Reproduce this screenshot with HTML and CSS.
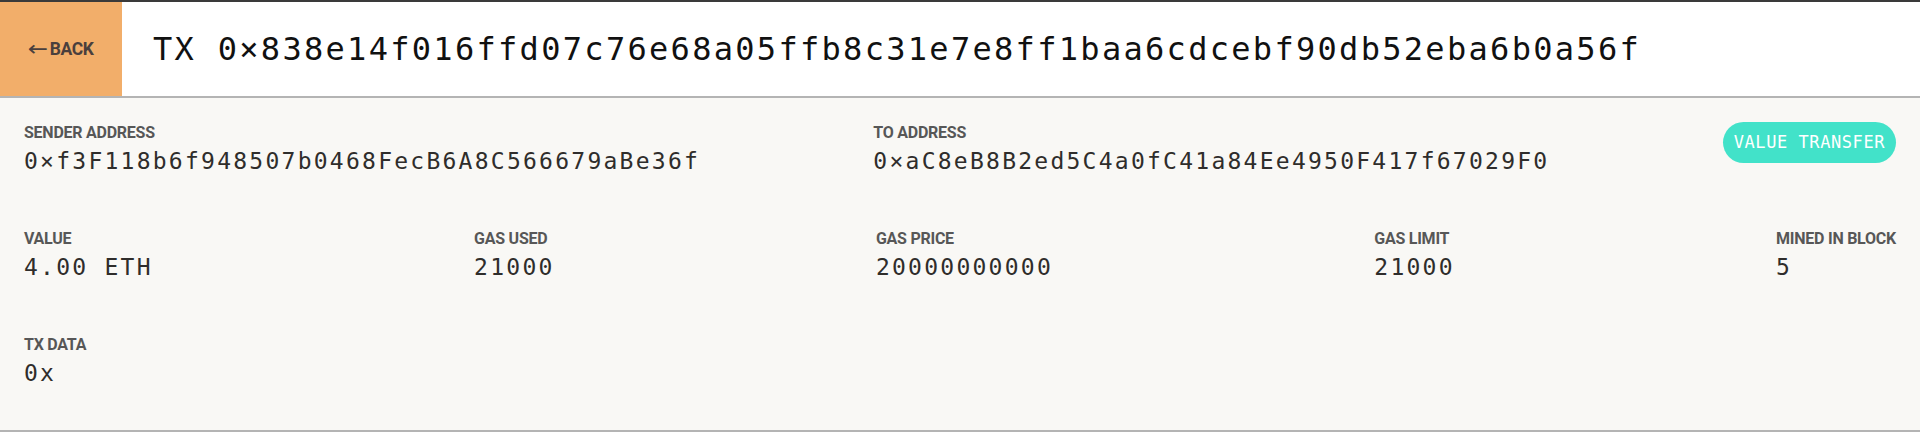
FILE: index.html
```html
<!DOCTYPE html>
<html lang="en">
<head>
<meta charset="utf-8">
<title>TX 0x838e14f016ffd07c76e68a05ffb8c31e7e8ff1baa6cdcebf90db52eba6b0a56f</title>
<link rel="stylesheet" href="styles.css">
</head>
<body>
<div class="page">
  <header class="header">
    <a class="back" href="#"><span class="arrow">&larr;</span><span>BACK</span></a>
    <h1 class="title">TX 0×838e14f016ffd07c76e68a05ffb8c31e7e8ff1baa6cdcebf90db52eba6b0a56f</h1>
  </header>
  <section class="details">
    <div class="row">
      <div class="field">
        <div class="label">Sender Address</div>
        <div class="value">0×f3F118b6f948507b0468FecB6A8C566679aBe36f</div>
      </div>
      <div class="field">
        <div class="label">To Address</div>
        <div class="value">0×aC8eB8B2ed5C4a0fC41a84Ee4950F417f67029F0</div>
      </div>
      <div class="pill">VALUE TRANSFER</div>
    </div>
    <div class="row">
      <div class="field">
        <div class="label">Value</div>
        <div class="value">4.00 ETH</div>
      </div>
      <div class="field">
        <div class="label">Gas Used</div>
        <div class="value">21000</div>
      </div>
      <div class="field">
        <div class="label">Gas Price</div>
        <div class="value">20000000000</div>
      </div>
      <div class="field">
        <div class="label">Gas Limit</div>
        <div class="value">21000</div>
      </div>
      <div class="field">
        <div class="label">Mined In Block</div>
        <div class="value">5</div>
      </div>
    </div>
    <div class="row">
      <div class="field">
        <div class="label">TX Data</div>
        <div class="value">0x</div>
      </div>
    </div>
  </section>
</div>
</body>
</html>
```
FILE: styles.css
```css
html, body {
  margin: 0;
  padding: 0;
  background: #ffffff;
}

.page {
  border-top: 2px solid #3a3a3a;
}

.header {
  display: flex;
  align-items: center;
  height: 94px;
  background: #ffffff;
  border-bottom: 2px solid #b4b4b4;
}

.back {
  align-self: stretch;
  width: 122px;
  background: #f2ae6a;
  display: flex;
  align-items: center;
  justify-content: center;
  gap: 4px;
  color: #4a3f3d;
  text-decoration: none;
  font-family: Roboto, "Liberation Sans", sans-serif;
  font-weight: 700;
  font-size: 17.5px;
  letter-spacing: -0.4px;
}

.arrow {
  font-family: "DejaVu Sans", sans-serif;
  font-weight: 400;
  font-size: 21px;
  line-height: 1;
  transform: scaleX(1.15);
}

.title {
  margin: 0 0 0 31px;
  font-family: "DejaVu Sans Mono", monospace;
  font-weight: 400;
  font-size: 32px;
  letter-spacing: 2.3px;
  color: #111111;
  white-space: nowrap;
}

.details {
  background: #f9f8f5;
  border-bottom: 2px solid #b4b4b4;
  padding: 26px 24px 45px;
}

.row {
  display: flex;
  justify-content: space-between;
  align-items: flex-start;
}

.row + .row {
  margin-top: 57px;
}

.label {
  font-family: Roboto, "Liberation Sans", sans-serif;
  font-weight: 700;
  font-size: 16px;
  line-height: 17px;
  letter-spacing: -0.25px;
  text-transform: uppercase;
  color: #575757;
}

.value {
  margin-top: 8px;
  font-family: "DejaVu Sans Mono", monospace;
  font-size: 23px;
  line-height: 24px;
  letter-spacing: 2.25px;
  color: #2f2d2b;
  white-space: nowrap;
}

.pill {
  margin-top: -2px;
  height: 41px;
  line-height: 41px;
  padding: 0 11px;
  border-radius: 21px;
  background: #42e2c9;
  color: #ffffff;
  font-family: "DejaVu Sans Mono", monospace;
  font-size: 17px;
  letter-spacing: 0.57px;
  white-space: nowrap;
}
```
